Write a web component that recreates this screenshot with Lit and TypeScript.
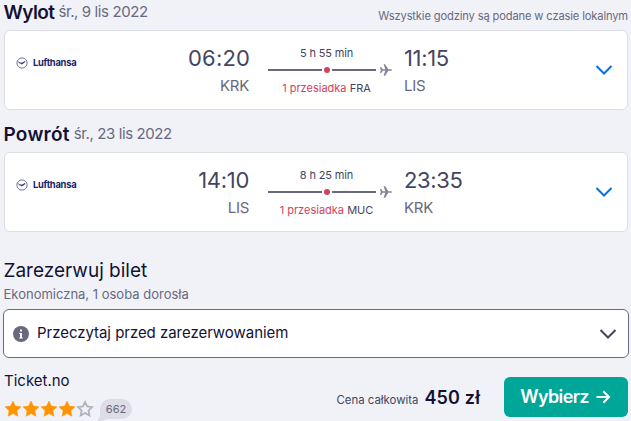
import { LitElement, html, css, svg } from "lit";
import { customElement, property } from "lit/decorators.js";
import { styleMap } from "lit/directives/style-map.js";

interface Stop { time: string; code: string; spacing: number }
interface Leg { title: string; titleSpacing: number; date: string; note?: string; from: Stop; to: Stop; duration: string; via: string }

const LEGS: Leg[] = [
  {
    title: "Wylot", titleSpacing: -0.6, date: "śr., 9 lis 2022",
    note: "Wszystkie godziny są podane w czasie lokalnym",
    from: { time: "06:20", code: "KRK", spacing: 0.2 },
    to: { time: "11:15", code: "LIS", spacing: -0.35 },
    duration: "5 h 55 min", via: "FRA",
  },
  {
    title: "Powrót", titleSpacing: 0.25, date: "śr., 23 lis 2022",
    from: { time: "14:10", code: "LIS", spacing: -0.3 },
    to: { time: "23:35", code: "KRK", spacing: -0.35 },
    duration: "8 h 25 min", via: "MUC",
  },
];

@customElement("flight-leg")
class FlightLeg extends LitElement {
  @property({ attribute: false }) leg!: Leg;

  static styles = css`
    :host { display: block; height: 122px; }
    .head { display: flex; height: 30px; box-sizing: border-box; line-height: 24px; color: #68697f; }
    .title { font-size: 19px; font-weight: 600; color: #111236; margin: 1px 4px 0 -0.5px; }
    .date { font-size: 15px; letter-spacing: -0.4px; }
    .note { margin-left: auto; font-size: 11.2px; letter-spacing: -0.16px; line-height: 32px; }
    .card {
      display: grid; grid-template-columns: 183px 61px 19px 124px 12px 1fr 36px;
      height: 80px; box-sizing: border-box; background: #fff;
      border: 1px solid #dddde5; border-radius: 6px;
    }
    .airline { display: flex; align-items: center; height: 15px; margin: 24px 0 0 10.500px; gap: 5.500px;
      color: #1b1f69; font-size: 9.400px; font-weight: 700; line-height: 15px; letter-spacing: -0.27px; }
    .stop { padding-top: 13px; color: #444560; }
    .from { text-align: right; }
    .time { font-size: 22px; font-weight: 370; line-height: 28px; height: 28px; }
    .code { font-size: 15px; line-height: 27px; letter-spacing: -0.3px; color: #68697f; }
    .path { font-size: 11px; line-height: 16px; color: #444560; text-align: center; width: 117px; padding-top: 14px; }
    .duration { letter-spacing: -0.15px; }
    .line { display: block; width: 124px; height: 14px; margin: 2px 0 3px; }
    .red { color: #d1435b; }
    .chevron { margin: 33px 0 0 4px; }
  `;

  render() {
    const { title, titleSpacing, date, note, from, to, duration, via } = this.leg;
    const stop = (s: Stop, side: string) => html`
      <div class="stop ${side}">
        <div class="time" style=${styleMap({ letterSpacing: `${s.spacing}px` })}>${s.time}</div>
        <div class="code">${s.code}</div>
      </div>`;
    return html`
      <div class="head">
        <span class="title" style=${styleMap({ letterSpacing: `${titleSpacing}px` })}>${title}</span>
        <span class="date">${date}</span>
        ${note ? html`<span class="note">${note}</span>` : ""}
      </div>
      <div class="card">
        <div class="airline">
          <svg width="12" height="12" viewBox="0 0 12 12" fill="none" stroke="#34377c">
            <circle cx="6" cy="6" r="5.100" stroke-width=".7"/>
            <path d="M1.800 4.600 4.200 5.800" stroke-width=".7"/>
            <path d="M3.300 5.700 6 6.300 9.200 4.500M5.200 7.100 7.600 5.800" stroke-width="1.100"/>
          </svg>
          <span>Lufthansa</span>
        </div>
        ${stop(from, "from")}
        <span></span>
        <div class="path">
          <div class="duration">${duration}</div>
          <svg class="line" viewBox="0 0 124 14">
            <path d="M0 7H54M64 7H108" stroke="#68697f" stroke-width="2"/>
            <circle cx="59" cy="7" r="3" fill="#d1435b"/>
            <path d="M112 4h1.200l1.500 2.200h2.600L115.600 1.200h1.500l3.200 5h2.900a.8.8 0 0 1 0 1.600h-2.900L117.100 12.800h-1.500l1.700-5h-2.600l-1.500 2.200H112l.8-3z" fill="#848496"/>
          </svg>
          <div><span class="red">1 przesiadka</span> ${via}</div>
        </div>
        <span></span>
        ${stop(to, "to")}
        <svg class="chevron" width="18" height="12" viewBox="0 0 18 12" fill="none">
          <path d="M1.500 2 9 9.500 16.500 2" stroke="#0770e3" stroke-width="2"/>
        </svg>
      </div>`;
  }
}

const STAR = "M8.500.8 10.900 5.900 16.500 6.600 12.400 10.500 13.500 16.100 8.500 13.400 3.500 16.100 4.600 10.500.5 6.600 6.100 5.900Z";

@customElement("app-root")
class AppRoot extends LitElement {
  static styles = css`
    :host { display: block; height: 421px; overflow: hidden; box-sizing: border-box; padding: 0 3px 0 4px;
      background: #f1f2f8; color: #111236; font-family: Inter, "Liberation Sans", sans-serif; }
    .booking { padding-top: 15px; }
    .heading { font-size: 19px; line-height: 24px; margin-left: -0.5px; }
    .sub { font-size: 13px; line-height: 20px; height: 20px; margin: 1px 0 0 -0.5px; color: #68697f; }
    .notice { display: flex; align-items: center; box-sizing: border-box; height: 49px; margin: 5px -1px 0;
      padding: 0 11px 0 9px; background: #fff; border: 1px solid #68697f; border-radius: 6px; font-size: 15px; }
    .text { margin: -2px auto 0 8px; letter-spacing: -0.04px; }
    .offer { display: flex; height: 62px; }
    .agent { font-size: 15px; line-height: 22px; padding-top: 12px; margin-right: auto; }
    .rating { display: flex; margin-top: 8px; }
    .stars { display: block; }
    .badge { position: relative; box-sizing: border-box; width: 32px; height: 20px; margin: -1px 0 0 6px; border-radius: 10px;
      background: #dddde5; color: #68697f; font-size: 11px; line-height: 20px; text-align: center; }
    .tail { position: absolute; left: -3px; top: 10px; }
    .count { position: relative; }
    .total { font-size: 11.400px; line-height: 16px; color: #444560; padding-top: 34px; margin-right: 6px; }
    .price { font-size: 18px; font-weight: 600; line-height: 24px; padding-top: 28px; margin-right: 24px; letter-spacing: .15px; }
    .button { display: flex; align-items: center; justify-content: center; gap: 7px; box-sizing: border-box;
      width: 124px; height: 40px; margin-top: 19px; border: 0; border-radius: 6px; background: #00a698; color: #fff;
      padding: 0 1px 1px 0; font: 600 18px Inter, "Liberation Sans", sans-serif; letter-spacing: -0.6px; }
  `;

  render() {
    return html`
      ${LEGS.map((leg) => html`<flight-leg .leg=${leg}></flight-leg>`)}
      <div class="booking">
        <div class="heading">Zarezerwuj bilet</div>
        <div class="sub">Ekonomiczna, 1 osoba dorosła</div>
      </div>
      <div class="notice">
        <svg width="16" height="16" viewBox="0 0 16 16">
          <circle cx="8" cy="8" r="8" fill="#68697f"/>
          <path d="M7 3.500h2v2H7zM6.200 7H9v4.500h.8v1H6.200v-1H7V8h-.8z" fill="#fff"/>
        </svg>
        <span class="text">Przeczytaj przed zarezerwowaniem</span>
        <svg width="18" height="12" viewBox="0 0 18 12" fill="none">
          <path d="M1.500 2 9 9.500 16.500 2" stroke="#444560" stroke-width="2"/>
        </svg>
      </div>
      <div class="offer">
        <div class="agent">
          <div>Ticket.no</div>
          <div class="rating">
            <svg class="stars" width="90" height="17" viewBox="0 0 90 17">
              ${[0, 1, 2, 3].map((i) => svg`<path transform="translate(${i * 18 + 0.5} .2)" d=${STAR} fill="#ff9400" stroke="#ff9400" stroke-width=".5"/>`)}
              <path transform="translate(73.600 1.300) scale(.88)" d=${STAR} fill="none" stroke="#b2b2bf" stroke-width="2"/>
            </svg>
            <div class="badge">
              <svg class="tail" width="14" height="13" viewBox="0 0 14 13"><path d="M3 0V7L0 13 13 9.500z" fill="#dddde5"/></svg>
              <span class="count">662</span>
            </div>
          </div>
        </div>
        <span class="total">Cena całkowita</span>
        <span class="price">450 zł</span>
        <button class="button">Wybierz
          <svg width="15" height="14" viewBox="0 0 15 14" fill="none" stroke="#fff" stroke-width="2">
            <path d="M.5 7H13M7.300 1.300 13 7 7.300 12.700"/>
          </svg>
        </button>
      </div>`;
  }
}
